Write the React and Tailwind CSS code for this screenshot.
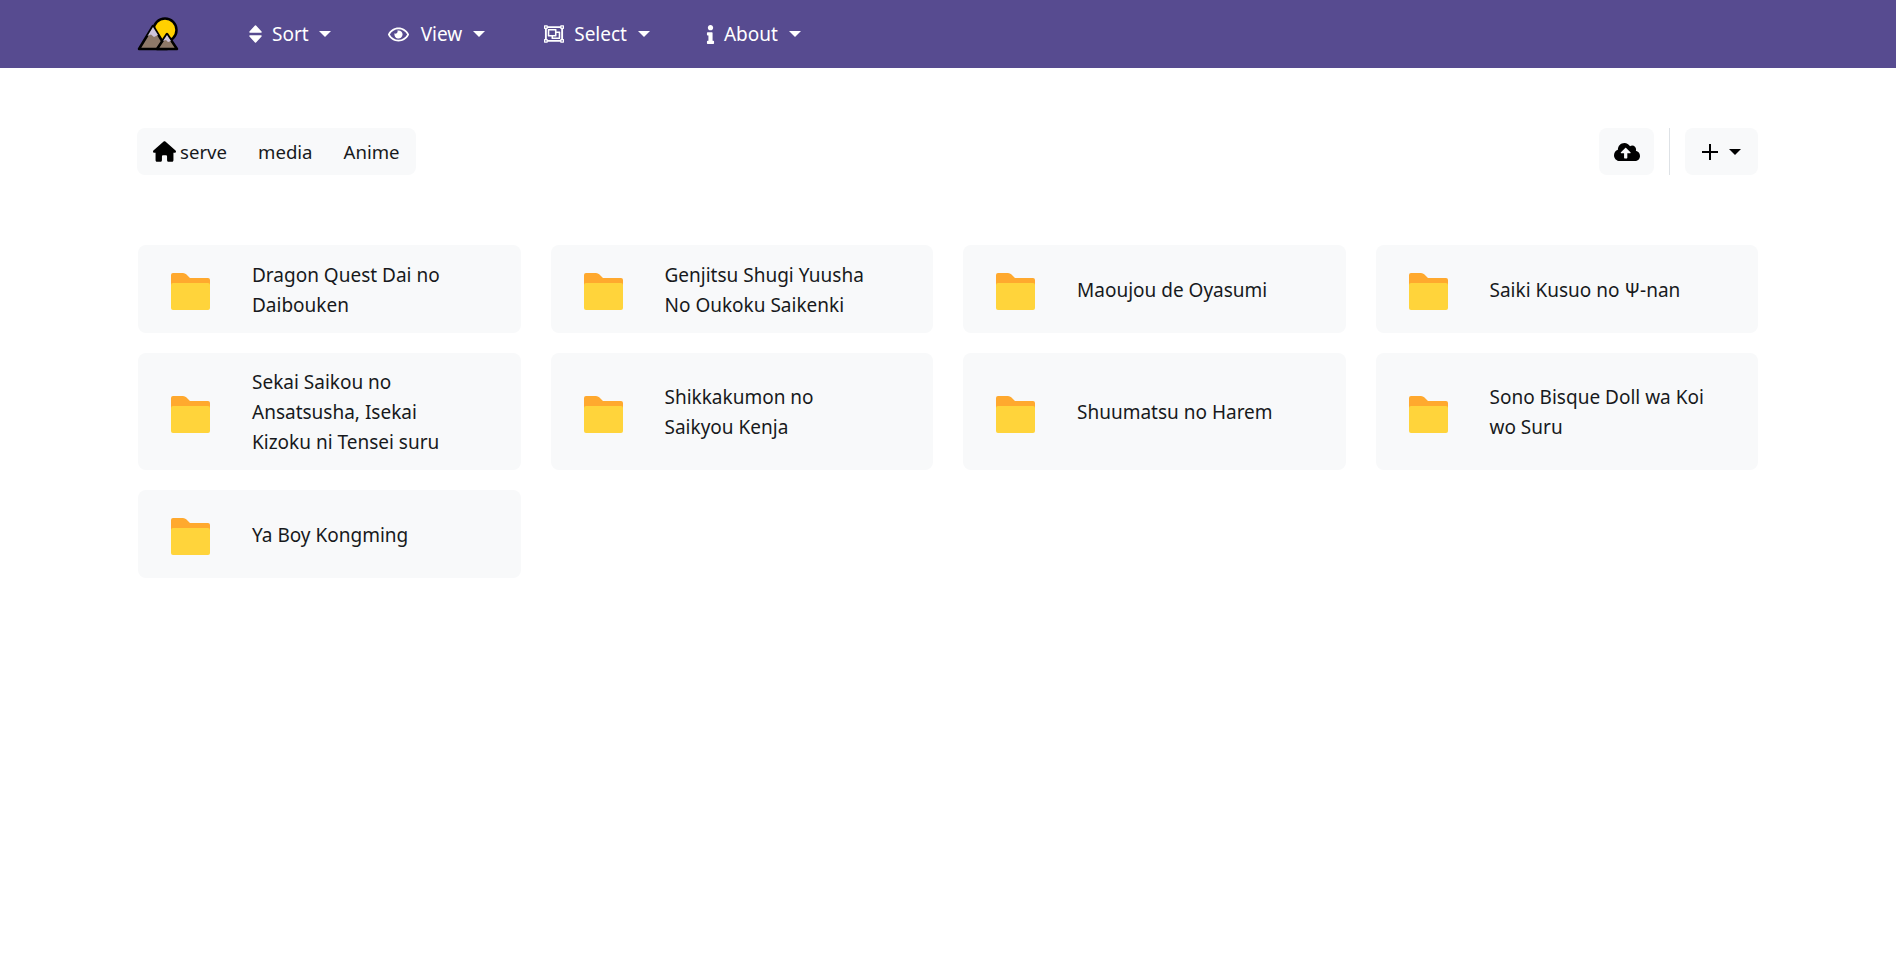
import React from 'react';
import { FaRegEye, FaRegObjectGroup, FaInfo, FaCloudUploadAlt } from 'react-icons/fa';
import { FaHouse } from 'react-icons/fa6';

const folders = [
  'Dragon Quest Dai no Daibouken',
  'Genjitsu Shugi Yuusha No Oukoku Saikenki',
  'Maoujou de Oyasumi',
  'Saiki Kusuo no Ψ-nan',
  'Sekai Saikou no Ansatsusha, Isekai Kizoku ni Tensei suru',
  'Shikkakumon no Saikyou Kenja',
  'Shuumatsu no Harem',
  'Sono Bisque Doll wa Koi wo Suru',
  'Ya Boy Kongming',
];

const Caret = ({ className = 'border-t-white' }) => (
  <span className={`inline-block w-0 h-0 border-x-[6px] border-x-transparent border-t-[6px] ${className}`}></span>
);

const Logo = () => (
  <svg width="42" height="36" viewBox="0 0 42 36" className="block">
    <circle cx="28" cy="14" r="11.5" fill="#ffd000" stroke="#000" strokeWidth="2.5" />
    <path d="M2 33 L16 10 L30 33 Z" fill="#8d7868" stroke="#000" strokeWidth="2.5" strokeLinejoin="round" />
    <path d="M16 11 L10.5 20 L14 18.5 L17 21 L21 19 Z" fill="#cfc6dc" />
    <path d="M20 33 L30 18 L40 33 Z" fill="#8d7868" stroke="#000" strokeWidth="2.5" strokeLinejoin="round" />
    <path d="M30 19 L26 25 L29 24 L31 26 L34 25 Z" fill="#cfc6dc" />
  </svg>
);

const SortIcon = () => (
  <svg width="13" height="18" viewBox="0 0 13 18" fill="#fff" stroke="#fff" strokeWidth="1.5" strokeLinejoin="round">
    <path d="M6.5 1 L12 7 H1 Z" />
    <path d="M1 11 H12 L6.5 17 Z" />
  </svg>
);

const NavItem = ({ icon, label, gap, caretGap = 'ml-[10px]', className = '' }) => (
  <div className={`flex items-center text-white ${className}`}>
    <span className="flex justify-center">{icon}</span>
    <span className={gap}>{label}</span>
    <span className={`${caretGap} flex`}><Caret /></span>
  </div>
);

const FolderIcon = () => (
  <svg width="39" height="37" viewBox="0 0 39 37" className="shrink-0 mt-[6px]">
    <path d="M2 0H12Q14 0 15.5 1.5L19 5H37a2 2 0 0 1 2 2V14H0V2a2 2 0 0 1 2-2z" fill="#ffa92e" />
    <rect x="0" y="10" width="39" height="27" rx="2" fill="#ffd43b" />
  </svg>
);

const FolderCard = ({ name }) => (
  <div className="flex items-center bg-[#f8f9fa] rounded-lg pl-[33px] pr-[24px] pt-[12px] pb-[13px] min-h-[88px]">
    <FolderIcon />
    <div className="ml-[42px] mt-[2px] text-[19px] leading-[30px] max-w-[218px]">{name}</div>
  </div>
);

export default function App() {
  return (
    <div className="min-h-screen bg-white text-[19px] text-[#17191c] font-['Noto_Sans','Open_Sans',sans-serif]">
      <nav className="h-[68px] bg-[#574b90] flex items-center pl-[137px]">
        <Logo />
        <div className="flex items-center ml-[70px]">
          <NavItem icon={<SortIcon />} label="Sort" gap="ml-[10px]" />
          <NavItem className="ml-[57px]" icon={<FaRegEye size={21} />} label="View" gap="ml-[12px]" caretGap="ml-[11px]" />
          <NavItem className="ml-[59px]" icon={<FaRegObjectGroup size={20} />} label="Select" gap="ml-[10px]" caretGap="ml-[11px]" />
          <NavItem className="ml-[51px]" icon={<FaInfo size={19} />} label="About" gap="ml-[4px]" caretGap="ml-[11px]" />
        </div>
      </nav>

      <main className="pl-[137px] pr-[138px]">
        <div className="flex justify-between items-center pt-[60px]">
          <div className="flex items-center h-[47px] bg-[#f8f9fa] rounded-lg pl-[16px] pr-[16px] text-[18.6px]">
            <FaHouse size={23} className="text-black" />
            <span className="ml-[4px]">serve</span>
            <span className="ml-[31px]">media</span>
            <span className="ml-[31px]">Anime</span>
          </div>
          <div className="flex items-center">
            <button className="w-[55px] h-[47px] bg-[#f8f9fa] rounded-lg flex items-center justify-center">
              <FaCloudUploadAlt size={26} className="text-black" />
            </button>
            <div className="w-px h-[47px] bg-[#dee2e6] mx-[15px]"></div>
            <button className="w-[73px] h-[47px] bg-[#f8f9fa] rounded-lg flex items-center justify-center gap-[11px]">
              <svg width="16" height="16" viewBox="0 0 16 16" stroke="#000" strokeWidth="2">
                <path d="M0 8H16M8 0V16" />
              </svg>
              <span className="flex"><Caret className="border-t-black" /></span>
            </button>
          </div>
        </div>

        <div className="grid grid-cols-4 gap-x-[30px] gap-y-[20px] mt-[70px] ml-[1px]">
          {folders.map((name) => (
            <FolderCard key={name} name={name} />
          ))}
        </div>
      </main>
    </div>
  );
}
